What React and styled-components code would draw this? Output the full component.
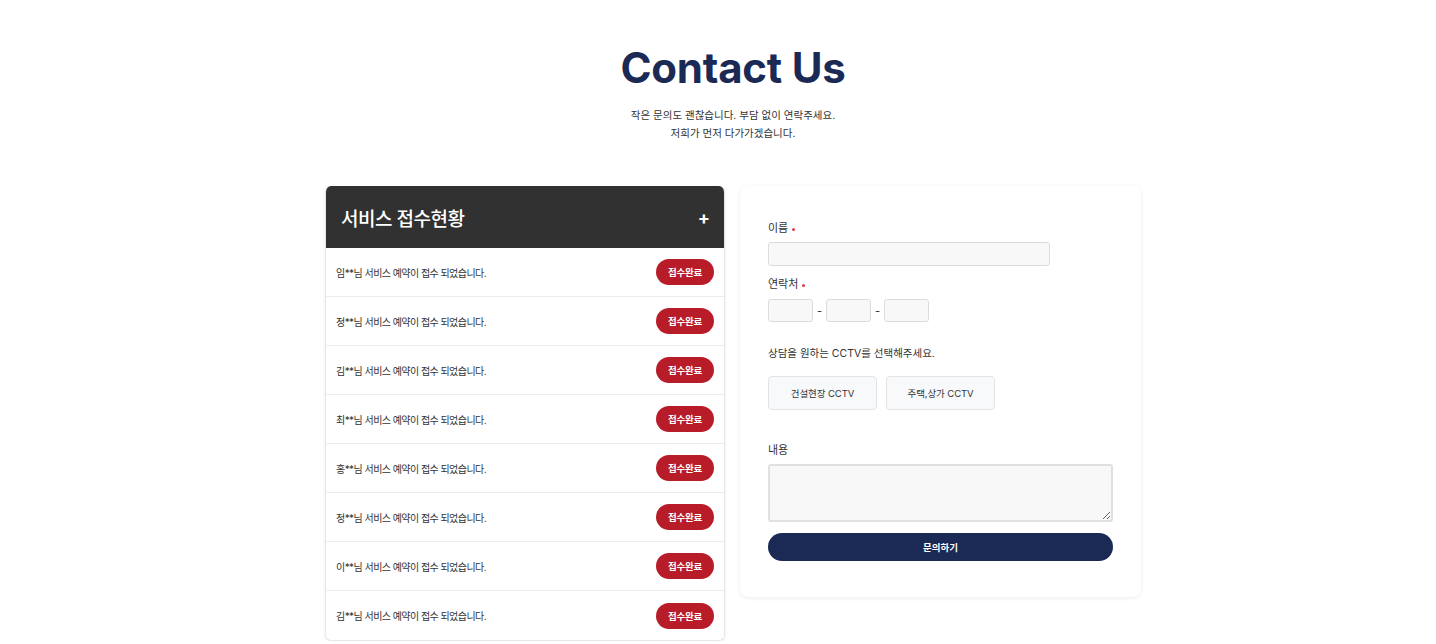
import React from "react";
import styled, { createGlobalStyle } from "styled-components";

const GlobalStyle = createGlobalStyle`
  body {
    margin: 0;
    background: #fff;
    font-family: Inter, "Noto Sans CJK KR", sans-serif;
    color: #333;
  }
  * { box-sizing: border-box; }
`;

const requests = [
  "임**님 서비스 예약이 접수 되었습니다.",
  "정**님 서비스 예약이 접수 되었습니다.",
  "김**님 서비스 예약이 접수 되었습니다.",
  "최**님 서비스 예약이 접수 되었습니다.",
  "홍**님 서비스 예약이 접수 되었습니다.",
  "정**님 서비스 예약이 접수 되었습니다.",
  "이**님 서비스 예약이 접수 되었습니다.",
  "김**님 서비스 예약이 접수 되었습니다."
];

const App = () => (
  <Page>
    <GlobalStyle />
    <Title>Contact Us</Title>
    <Sub>
      작은 문의도 괜찮습니다. 부담 없이 연락주세요.
      <br />
      저희가 먼저 다가가겠습니다.
    </Sub>
    <Columns>
      <StatusPanel>
        <StatusHeader>
          <StatusTitle>서비스 접수현황</StatusTitle>
          <Plus>+</Plus>
        </StatusHeader>
        {requests.map((text, i) => (
          <Row key={i}>
            <RowText>{text}</RowText>
            <Badge>접수완료</Badge>
          </Row>
        ))}
      </StatusPanel>

      <FormPanel>
        <Label>
          이름<Dot />
        </Label>
        <NameInput />
        <Label top={10}>
          연락처<Dot />
        </Label>
        <PhoneRow>
          <PhoneInput />
          <Dash>-</Dash>
          <PhoneInput />
          <Dash>-</Dash>
          <PhoneInput />
        </PhoneRow>
        <Question>상담을 원하는 CCTV를 선택해주세요.</Question>
        <ChoiceRow>
          <Choice>건설현장 CCTV</Choice>
          <Choice>주택,상가 CCTV</Choice>
        </ChoiceRow>
        <Label top={32}>내용</Label>
        <TextArea />
        <Submit>문의하기</Submit>
      </FormPanel>
    </Columns>
  </Page>
);

const Page = styled.div`
  padding: 43px 0 0 30px;
  display: flex;
  flex-direction: column;
  align-items: center;
`;

const Title = styled.h1`
  margin: 0;
  font-size: 42px;
  line-height: 50px;
  font-weight: 700;
  color: #1b2a55;
  letter-spacing: -0.2px;
`;

const Sub = styled.p`
  margin: 14px 0 0;
  font-size: 10.5px;
  line-height: 18px;
  text-align: center;
  color: #333;
`;

const Columns = styled.div`
  margin-top: 43px;
  display: flex;
  gap: 15px;
  align-items: flex-start;
`;

const StatusPanel = styled.div`
  width: 400px;
  border: 1px solid #e6e6e6;
  border-top: none;
  border-radius: 6px;
  overflow: hidden;
  box-shadow: 0 1px 4px rgba(0, 0, 0, 0.06);
  background: #fff;
`;

const StatusHeader = styled.div`
  height: 62px;
  background: #313131;
  display: flex;
  align-items: center;
  justify-content: space-between;
  padding: 0 14px 0 15px;
`;

const StatusTitle = styled.h2`
  margin: 0;
  font-size: 19px;
  font-weight: 500;
  letter-spacing: -0.5px;
  color: #fff;
`;

const Plus = styled.span`
  font-size: 18px;
  font-weight: 700;
  color: #fff;
`;

const Row = styled.div`
  height: 49px;
  display: flex;
  align-items: center;
  justify-content: space-between;
  padding: 0 10px 0 10px;
  border-bottom: 1px solid #ececec;
  &:last-child {
    border-bottom: none;
  }
`;

const RowText = styled.span`
  font-size: 10px;
  letter-spacing: -0.55px;
  color: #333;
`;

const Badge = styled.span`
  width: 58px;
  height: 26px;
  border-radius: 13px;
  background: #b71c28;
  color: #fff;
  font-size: 9.5px;
  font-weight: 700;
  letter-spacing: -0.3px;
  display: flex;
  align-items: center;
  justify-content: center;
`;

const FormPanel = styled.div`
  width: 401px;
  padding: 34px 28px 36px;
  background: #fff;
  border-radius: 8px;
  box-shadow: 0 1px 4px rgba(0, 0, 0, 0.08);
  display: flex;
  flex-direction: column;
`;

const Label = styled.div`
  margin-top: ${p => (p.top || 0)}px;
  font-size: 11px;
  line-height: 16px;
  color: #333;
  display: flex;
  align-items: center;
`;

const Dot = styled.span`
  width: 3px;
  height: 3px;
  border-radius: 50%;
  background: #e03a48;
  margin-left: 4px;
  margin-top: 3px;
`;

const fieldBase = `
  background: #f8f8f8;
  border: 1px solid #dcdcdc;
  border-radius: 3px;
`;

const NameInput = styled.div`
  ${fieldBase}
  margin-top: 6px;
  width: 282px;
  height: 24px;
`;

const PhoneRow = styled.div`
  margin-top: 7px;
  display: flex;
  align-items: center;
  gap: 4px;
`;

const PhoneInput = styled.div`
  ${fieldBase}
  width: 45px;
  height: 23px;
`;

const Dash = styled.span`
  font-size: 11px;
  width: 5px;
  text-align: center;
  color: #333;
`;

const Question = styled.div`
  margin-top: 23px;
  font-size: 10.5px;
  line-height: 18px;
  color: #333;
`;

const ChoiceRow = styled.div`
  margin-top: 13px;
  display: flex;
  gap: 9px;
`;

const Choice = styled.button`
  width: 109px;
  height: 34px;
  background: #f8f9fa;
  border: 1px solid #e3e3e3;
  border-radius: 4px;
  font-family: inherit;
  font-size: 9.5px;
  letter-spacing: -0.1px;
  color: #333;
  padding: 0;
`;

const TextArea = styled.textarea`
  ${fieldBase}
  margin-top: 6px;
  width: 345px;
  height: 58px;
  border: 2px solid #e0e0e0;
  resize: vertical;
  display: block;
`;

const Submit = styled.button`
  margin-top: 11px;
  width: 345px;
  height: 28px;
  border: none;
  border-radius: 14px;
  background: #1b2a55;
  color: #fff;
  font-family: inherit;
  font-size: 9.5px;
  font-weight: 700;
`;

export default App;
